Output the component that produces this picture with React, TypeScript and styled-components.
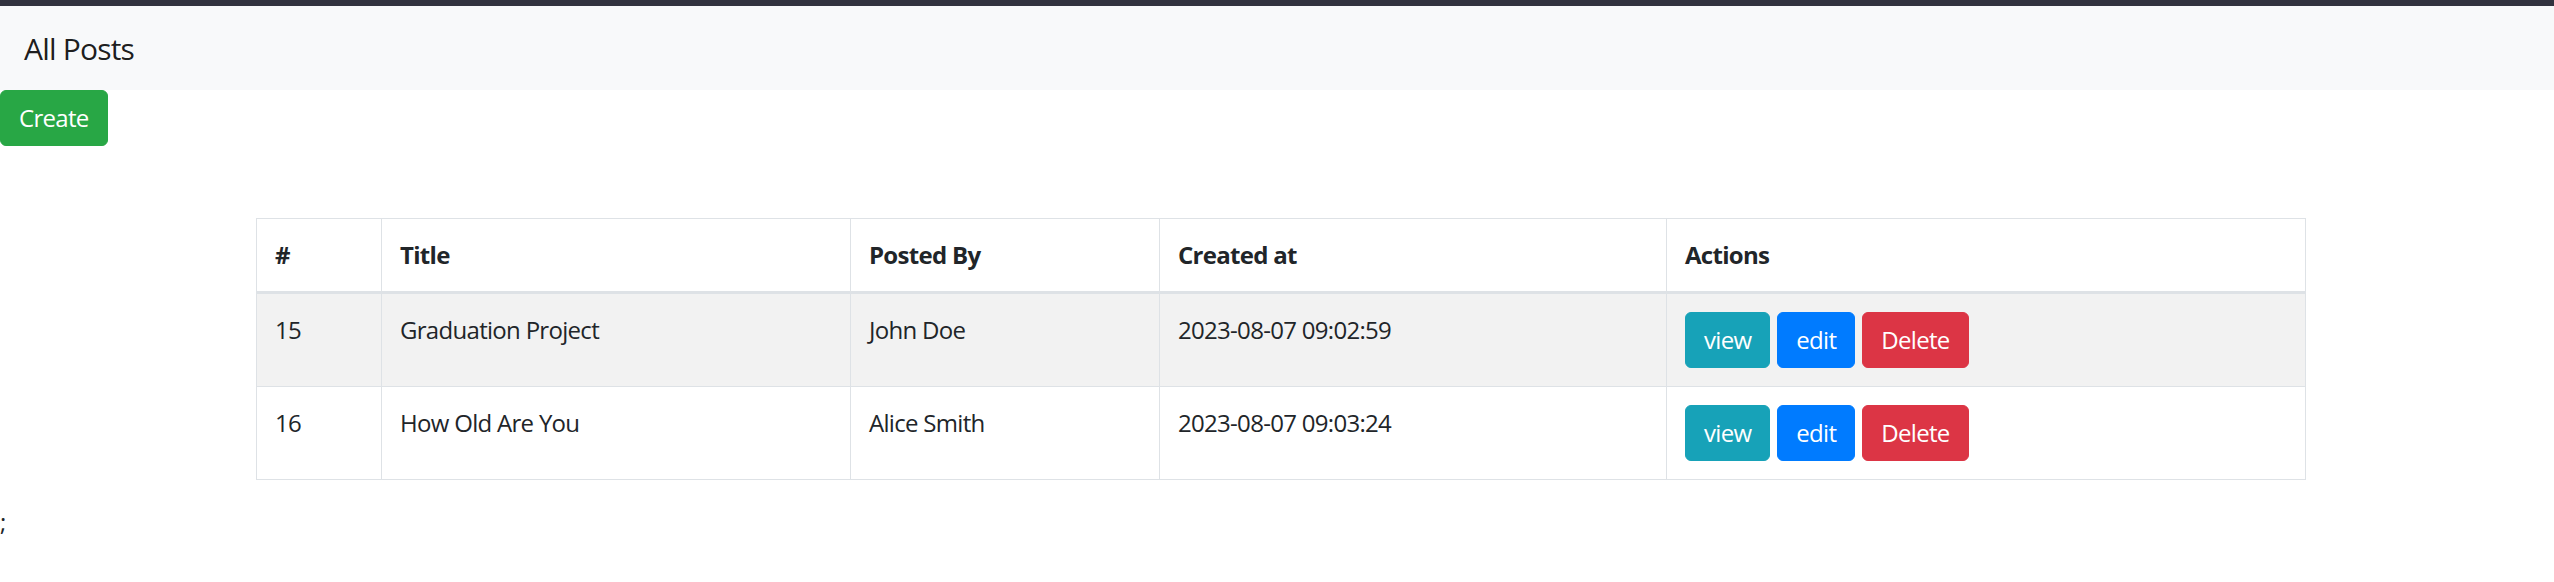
import React from "react";
import styled, { createGlobalStyle } from "styled-components";

const GlobalStyle = createGlobalStyle`
  html, body {
    margin: 0;
    padding: 0;
    background: #ffffff;
  }
  body {
    font-family: "Open Sans", "Noto Sans", "Liberation Sans", sans-serif;
    font-size: 24px;
    line-height: 36px;
    color: #212529;
    letter-spacing: -0.7px;
  }
`;

const TopStrip = styled.div`
  height: 6px;
  background: #32333f;
`;

const Navbar = styled.nav`
  display: flex;
  align-items: center;
  height: 84px;
  box-sizing: border-box;
  padding: 12px 24px;
  background: #f8f9fa;
`;

const Brand = styled.span`
  font-size: 30px;
  line-height: 45px;
  padding: 7.5px 0;
  color: rgba(0, 0, 0, 0.9);
  letter-spacing: -0.8px;
`;

type Variant = "success" | "info" | "primary" | "danger";

const colors: Record<Variant, string> = {
  success: "#28a745",
  info: "#17a2b8",
  primary: "#007bff",
  danger: "#dc3545",
};

const Button = styled.button<{ $variant: Variant }>`
  display: inline-block;
  box-sizing: border-box;
  height: 56px;
  padding: 9px 18px;
  margin: 0;
  border: 1px solid ${(p) => colors[p.$variant]};
  border-radius: 6px;
  background: ${(p) => colors[p.$variant]};
  color: #ffffff;
  font-family: inherit;
  font-size: 24px;
  line-height: 36px;
  letter-spacing: -0.7px;
  cursor: pointer;
`;

const CreateRow = styled.div`
  display: flex;
`;

const TableWrap = styled.div`
  margin-top: 72px;
  padding-left: 256px;
`;

const Table = styled.table`
  width: 2049px;
  border-collapse: collapse;
  table-layout: fixed;
  margin-bottom: 24px;
`;

const Th = styled.th`
  text-align: left;
  vertical-align: bottom;
  font-weight: 700;
  padding: 18px;
  border: 1px solid #dee2e6;
  border-bottom: 3px solid #dee2e6;
  line-height: 36px;
`;

const Tr = styled.tr<{ $striped: boolean }>`
  background: ${(p) => (p.$striped ? "#f2f2f2" : "#ffffff")};
`;

const Td = styled.td`
  vertical-align: top;
  padding: 18px;
  border: 1px solid #dee2e6;
  line-height: 36px;
`;

const Actions = styled.div`
  display: flex;
  gap: 7px;
`;

const Trailer = styled.div`
  font-size: 24px;
  line-height: 36px;
`;

const posts = [
  { id: 15, title: "Graduation Project", by: "John Doe", at: "2023-08-07 09:02:59" },
  { id: 16, title: "How Old Are You", by: "Alice Smith", at: "2023-08-07 09:03:24" },
];

export default function App() {
  return (
    <>
      <GlobalStyle />
      <TopStrip />
      <Navbar>
        <Brand>All Posts</Brand>
      </Navbar>
      <CreateRow>
        <Button $variant="success">Create</Button>
      </CreateRow>
      <TableWrap>
        <Table>
          <colgroup>
            <col style={{ width: 125 }} />
            <col style={{ width: 469 }} />
            <col style={{ width: 309 }} />
            <col style={{ width: 507 }} />
            <col style={{ width: 639 }} />
          </colgroup>
          <thead>
            <tr>
              <Th>#</Th>
              <Th>Title</Th>
              <Th>Posted By</Th>
              <Th>Created at</Th>
              <Th>Actions</Th>
            </tr>
          </thead>
          <tbody>
            {posts.map((p, i) => (
              <Tr key={p.id} $striped={i % 2 === 0}>
                <Td>{p.id}</Td>
                <Td>{p.title}</Td>
                <Td>{p.by}</Td>
                <Td>{p.at}</Td>
                <Td>
                  <Actions>
                    <Button $variant="info">view</Button>
                    <Button $variant="primary">edit</Button>
                    <Button $variant="danger">Delete</Button>
                  </Actions>
                </Td>
              </Tr>
            ))}
          </tbody>
        </Table>
      </TableWrap>
      <Trailer>;</Trailer>
    </>
  );
}
